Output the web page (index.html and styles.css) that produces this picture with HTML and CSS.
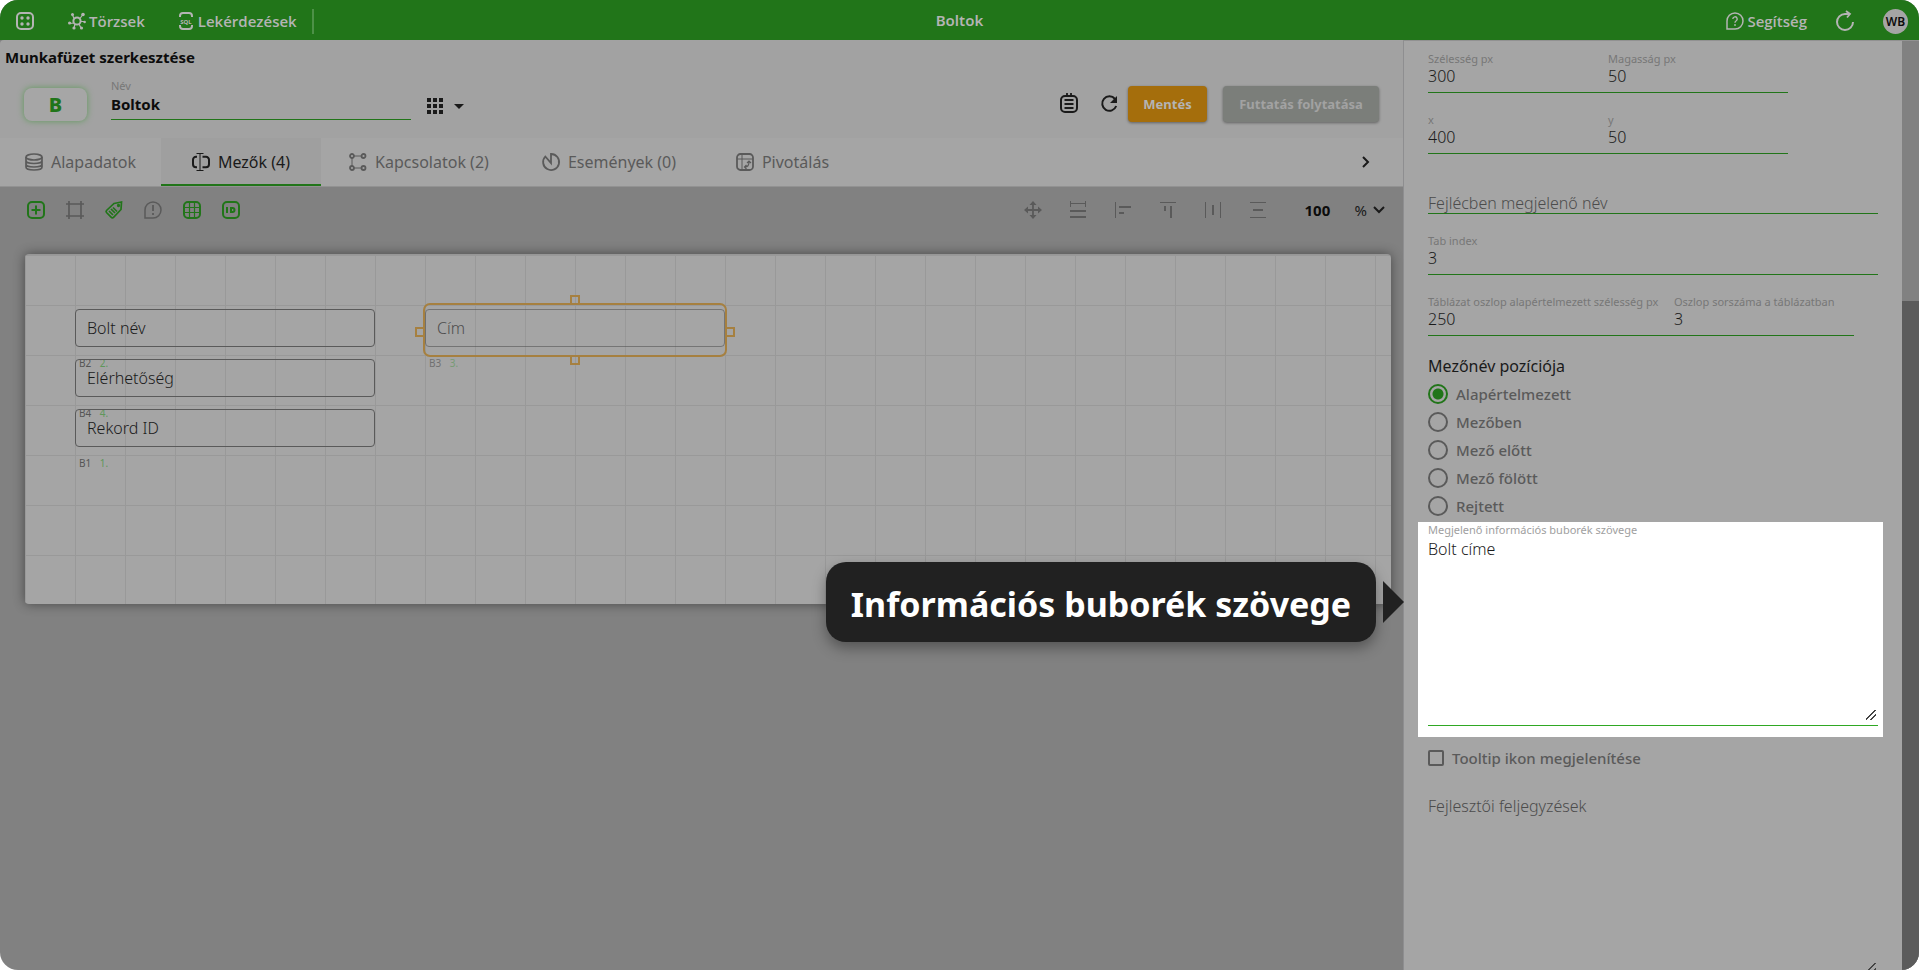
FILE: index.html
```
<!DOCTYPE html>
<html lang="hu">
<head>
<meta charset="utf-8">
<title>Boltok</title>
<link rel="stylesheet" href="styles.css">
</head>
<body>
<div class="app">
  <header class="topbar">
    <nav class="topnav">
      <button class="top-btn" aria-label="Menü"><svg class="i18" viewBox="0 0 18 18"><rect x="1" y="1" width="16" height="16" rx="4" fill="none" stroke="currentColor" stroke-width="2"/><g fill="currentColor"><circle cx="6" cy="6" r="1.7"/><circle cx="12" cy="6" r="1.7"/><circle cx="6" cy="12" r="1.7"/><circle cx="12" cy="12" r="1.7"/></g></svg></button>
      <a class="top-btn top-link" href="#torzsek"><svg class="i18" viewBox="0 0 18 18"><circle cx="9" cy="9" r="3.6" fill="none" stroke="currentColor" stroke-width="2"/><path d="M6 6.500 4.500 3M12 6.500l2.500-3.500M6 11l-4 .5M11 12l2 4M12.500 9.500h4M7 12l-1 4" stroke="currentColor" stroke-width="1.200"/><g fill="currentColor"><circle cx="4.500" cy="2.500" r="1.500"/><circle cx="15" cy="2.500" r="1.800"/><circle cx="1.600" cy="11" r="1.600"/><circle cx="16.600" cy="10" r="1.300"/><circle cx="6" cy="16" r="1.600"/><circle cx="13.500" cy="16" r="1.600"/></g></svg>Törzsek</a>
      <a class="top-btn top-link" href="#lekerdezesek"><svg class="i18" viewBox="0 0 18 18"><path d="M3 5V4a3 3 0 0 1 3-3h6a3 3 0 0 1 3 3v1M3 13v1a3 3 0 0 0 3 3h6a3 3 0 0 0 3-3v-1" fill="none" stroke="currentColor" stroke-width="2"/><text x="9" y="11.500" text-anchor="middle" class="sql">SQL</text></svg>Lekérdezések</a>
      <span class="top-sep"></span>
    </nav>
    <h1 class="top-title">Boltok</h1>
    <div class="top-right">
      <a class="top-btn top-link" href="#segitseg"><svg class="i18" viewBox="0 0 18 18"><path d="M1 17V9a8 8 0 1 1 8 8z" fill="none" stroke="currentColor" stroke-width="1.500"/><path d="M6.800 7a2.200 2.200 0 1 1 3.200 2c-.8.500-1 .8-1 1.800" fill="none" stroke="currentColor" stroke-width="1.400"/><circle cx="9" cy="13" r=".9" fill="currentColor"/></svg>Segítség</a>
      <button class="top-btn" aria-label="Frissítés"><svg class="i20" viewBox="0 0 20 20"><path d="M18 11a8 8 0 1 1-8-8h4" fill="none" stroke="currentColor" stroke-width="2"/><path d="m11 0 4 3-3 3.500" fill="none" stroke="currentColor" stroke-width="1.800"/></svg></button>
      <button class="avatar">WB</button>
    </div>
  </header>

  <div class="workspace">
    <main class="editor">
      <section class="book-head">
        <h2 class="page-title">Munkafüzet szerkesztése</h2>
        <div class="book-row">
          <span class="badge">B</span>
          <div class="name-field">
            <label for="book-name">Név</label>
            <input id="book-name" type="text" value="Boltok">
          </div>
          <button class="grid-btn" aria-label="Ikon választása">
            <svg class="i18" viewBox="0 0 18 18" fill="currentColor"><path d="M1 1h4v4H1zM7 1h4v4H7zM13 1h4v4h-4zM1 7h4v4H1zM7 7h4v4H7zM13 7h4v4h-4zM1 13h4v4H1zM7 13h4v4H7zM13 13h4v4h-4z"/></svg>
            <svg class="caret" viewBox="0 0 10 5"><path d="M0 0h10L5 5z" fill="currentColor"/></svg>
          </button>
          <div class="actions">
            <button class="icon-btn" aria-label="Jegyzetek"><svg class="i20" viewBox="0 0 20 20"><rect x="2" y="2" width="16" height="16" rx="4" fill="none" stroke="currentColor" stroke-width="2"/><path d="M8 -1v3M12 -1v3M5.500 6h9M5.500 10h9M5.500 14h9" stroke="currentColor" stroke-width="1.800"/></svg></button>
            <button class="icon-btn" aria-label="Újratöltés"><svg class="i20" viewBox="0 0 20 20"><path d="M16 5A7.200 7.200 0 1 0 17.200 12" fill="none" stroke="currentColor" stroke-width="2"/><path d="M18 2v7h-7z" fill="currentColor"/></svg></button>
            <button class="btn btn-save">Mentés</button>
            <button class="btn btn-run">Futtatás folytatása</button>
          </div>
        </div>
      </section>

      <nav class="tabs">
        <button class="tab"><svg class="i18" viewBox="0 0 18 18" fill="none" stroke="currentColor" stroke-width="1.700"><ellipse cx="9" cy="4" rx="8" ry="3"/><path d="M1 4v10c0 4 16 4 16 0V4M1 7.500c0 4 16 4 16 0M1 11c0 4 16 4 16 0"/></svg>Alapadatok</button>
        <button class="tab tab-active"><svg class="i18" viewBox="0 0 18 18" fill="none" stroke="currentColor"><path d="M5 3.800H4a3 3 0 0 0-3 3v4.400a3 3 0 0 0 3 3h1M10.500 3.800H14a3 3 0 0 1 3 3v4.400a3 3 0 0 1-3 3h-3.500" stroke-width="2"/><path d="M8 .5v17M4.500 .5h7M4.500 17.500h7" stroke-width="1"/></svg>Mezők (4)</button>
        <button class="tab"><svg class="i18" viewBox="0 0 18 18" fill="none" stroke="currentColor"><g stroke-width="1.800"><circle cx="3" cy="3" r="2"/><circle cx="14.500" cy="3" r="2"/><circle cx="3" cy="15" r="2"/><circle cx="14.500" cy="15" r="2"/></g><path d="M3 5v8M5 3h7.500M5 15h7.500" stroke-width="1"/></svg>Kapcsolatok (2)</button>
        <button class="tab"><svg class="i18" viewBox="0 0 18 18"><path d="M9 1a8 8 0 1 1-5.700 2.500L9 10z" fill="none" stroke="currentColor" stroke-width="1.800"/></svg>Események (0)</button>
        <button class="tab"><svg class="i18" viewBox="0 0 18 18" fill="none" stroke="currentColor"><rect x="1" y="1" width="16" height="16" rx="3.500" stroke-width="1.800"/><path d="M6 1v16M1 6h16" stroke-width="1"/><path d="M9 14c3 0 4-2 4-5M11 10l2-2 2 2M10.500 12 8.500 14l2 2" stroke-width="1.200"/></svg>Pivotálás</button>
        <button class="tabs-next" aria-label="További fülek"><svg viewBox="0 0 8 12"><path d="m1 1 5 5-5 5" fill="none" stroke="currentColor" stroke-width="2"/></svg></button>
      </nav>

      <div class="toolbar">
        <div class="tools tools-left">
          <button class="on" aria-label="Új mező"><svg class="i18" viewBox="0 0 18 18" fill="none" stroke="currentColor" stroke-width="2"><rect x="1" y="1" width="16" height="16" rx="4"/><path d="M9 4.500v9M4.500 9h9"/></svg></button>
          <button aria-label="Keret"><svg class="i18" viewBox="0 0 18 18" fill="none" stroke="currentColor" stroke-width="1.700"><path d="M3 0v18M15 0v18M0 3h18M0 15h18"/></svg></button>
          <button class="on" aria-label="Címke"><svg class="i18" viewBox="0 0 18 18" fill="none" stroke="currentColor" stroke-width="1.700"><path d="M9 2.500 16.500 1 16 8.500 8.500 16.300a1.500 1.500 0 0 1-2.200 0L1.500 11.500a1.500 1.500 0 0 1 0-2zM4 10l4 4M6 8l4 4M8 6.500l4 4"/><circle cx="13.500" cy="4.500" r=".8"/></svg></button>
          <button aria-label="Figyelmeztetés"><svg class="i18" viewBox="0 0 18 18" fill="none" stroke="currentColor"><path d="M1 17V9a8 8 0 1 1 8 8z" stroke-width="1.500"/><path d="M9 4v6M9 12v2" stroke-width="1.800"/></svg></button>
          <button class="on" aria-label="Rács"><svg class="i18" viewBox="0 0 18 18" fill="none" stroke="currentColor"><rect x="1" y="1" width="16" height="16" rx="4" stroke-width="2"/><path d="M6.500 1v16M11.500 1v16M1 6.500h16M1 11.500h16" stroke-width="1.200"/></svg></button>
          <button class="on" aria-label="Azonosító"><svg class="i18" viewBox="0 0 18 18" fill="none" stroke="currentColor" stroke-width="2"><rect x="1" y="1" width="16" height="16" rx="4"/><path d="M5 6v6M9 7h1.500a2 2 0 0 1 0 4H9z"/></svg></button>
        </div>
        <div class="tools tools-right">
          <button aria-label="Mozgatás"><svg class="i18" viewBox="0 0 18 18"><path d="M9 2v14M2 9h14" stroke="currentColor" stroke-width="1.800"/><path d="m9 0 3.500 4h-7zM9 18l3.500-4h-7zM0 9l4-3.500v7zM18 9l-4-3.500v7z" fill="currentColor"/></svg></button>
          <button aria-label="Azonos szélesség"><svg class="i18" viewBox="0 0 18 18" fill="none" stroke="currentColor"><path d="M1.500 0v6M16.500 0v6M1 2.500h16" stroke-width="1"/><path d="M1 10h16M1 16h16" stroke-width="2"/></svg></button>
          <button aria-label="Balra igazítás"><svg class="i18" viewBox="0 0 18 18" fill="none" stroke="currentColor"><path d="M1.500 1v16" stroke-width="1"/><path d="M5 6h12M5 12h5" stroke-width="2"/></svg></button>
          <button aria-label="Felülre igazítás"><svg class="i18" viewBox="0 0 18 18" fill="none" stroke="currentColor"><path d="M1 1.500h16" stroke-width="1"/><path d="M6 5v5M12 5v12" stroke-width="2"/></svg></button>
          <button aria-label="Vízszintes elosztás"><svg class="i18" viewBox="0 0 18 18" fill="none" stroke="currentColor"><path d="M1.500 1v16M16.500 1v16" stroke-width="1"/><path d="M9 4v10" stroke-width="2"/></svg></button>
          <button aria-label="Függőleges elosztás"><svg class="i18" viewBox="0 0 18 18" fill="none" stroke="currentColor"><path d="M1 1.500h16M1 16.500h16" stroke-width="1"/><path d="M4 9h10" stroke-width="2"/></svg></button>
        </div>
        <input class="zoom-value" type="text" aria-label="Nagyítás" value="100">
        <span class="zoom-unit">%</span>
        <button class="zoom-more" aria-label="Nagyítás választása"><svg viewBox="0 0 12 8"><path d="m1 1 5 5 5-5" fill="none" stroke="currentColor" stroke-width="2"/></svg></button>
      </div>

      <div class="stage">
        <div class="canvas">
          <div class="node n-name"><button class="node-box">Bolt név</button><p class="node-tag">B2 <span>2.</span></p></div>
          <div class="node n-contact"><button class="node-box">Elérhetőség</button><p class="node-tag">B4 <span>4.</span></p></div>
          <div class="node n-id"><button class="node-box">Rekord ID</button><p class="node-tag">B1 <span>1.</span></p></div>
          <div class="node n-address"><button class="node-box">Cím</button><p class="node-tag">B3 <span>3.</span></p></div>
          <div class="selection"><i class="h-top"></i><i class="h-right"></i><i class="h-bottom"></i><i class="h-left"></i></div>
        </div>
        <div class="callout">Információs buborék szövege</div>
      </div>
    </main>

    <aside class="panel">
      <form class="props">
        <div class="pair">
          <div class="field"><label for="w">Szélesség px</label><input id="w" type="text" value="300"></div>
          <div class="field"><label for="h">Magasság px</label><input id="h" type="text" value="50"></div>
        </div>
        <div class="pair">
          <div class="field"><label for="x">x</label><input id="x" type="text" value="400"></div>
          <div class="field"><label for="y">y</label><input id="y" type="text" value="50"></div>
        </div>
        <input class="head-name" type="text" aria-label="Fejlécben megjelenő név" placeholder="Fejlécben megjelenő név">
        <div class="field"><label for="tab">Tab index</label><input id="tab" type="text" value="3"></div>
        <div class="pair pair-wide">
          <div class="field"><label for="colw">Táblázat oszlop alapértelmezett szélesség px</label><input id="colw" type="text" value="250"></div>
          <div class="field"><label for="coln">Oszlop sorszáma a táblázatban</label><input id="coln" type="text" value="3"></div>
        </div>
        <fieldset class="positions">
          <legend>Mezőnév pozíciója</legend>
          <label><input type="radio" name="pos" checked>Alapértelmezett</label>
          <label><input type="radio" name="pos">Mezőben</label>
          <label><input type="radio" name="pos">Mező előtt</label>
          <label><input type="radio" name="pos">Mező fölött</label>
          <label><input type="radio" name="pos">Rejtett</label>
        </fieldset>
        <div class="spotlight">
          <label for="tip">Megjelenő információs buborék szövege</label>
          <div class="tip-line"><textarea id="tip">Bolt címe</textarea></div>
        </div>
        <label class="check"><input type="checkbox">Tooltip ikon megjelenítése</label>
        <textarea class="notes" aria-label="Fejlesztői feljegyzések" placeholder="Fejlesztői feljegyzések"></textarea>
      </form>
      <div class="scrollbar"><div class="thumb"></div></div>
    </aside>
  </div>
</div>
</body>
</html>
```
FILE: styles.css
```
:root {
  --green: #217519;
  --paper: #a5a5a5;
  --ink: #1a1a1a;
  --muted: #5a5a5a;
  --label: #777777;
  --field-line: #217519;
}
* { box-sizing: border-box; }
body {
  margin: 0;
  background: #fff;
  font-family: "Noto Sans", "Open Sans", sans-serif;
  font-size: 15px;
  color: var(--ink);
}
button, input, textarea { font: inherit; color: inherit; margin: 0; padding: 0; border: 0; background: none; outline: 0; border-radius: 0; }
h1, h2, p { margin: 0; }
svg { display: block; flex: none; overflow: visible; }
.i18 { width: 18px; height: 18px; }
.i20 { width: 20px; height: 20px; }

.app { height: 100vh; display: flex; flex-direction: column; overflow: hidden; border-radius: 18px; background: #818181; }

/* top bar */
.topbar { flex: none; height: 40px; display: grid; grid-template-columns: 1fr auto 1fr; align-items: center; background: var(--green); color: #b4b4b4; }
.topnav, .top-right { display: flex; align-items: center; height: 40px; padding-top: 2px; }
.topnav { padding-left: 16px; }
.top-btn { display: flex; align-items: center; gap: 3px; color: inherit; }
.top-link { font-family: "Open Sans", "Noto Sans", sans-serif; font-weight: 600; text-decoration: none; line-height: 24px; }
.topnav .top-link { margin-left: 34px; }
.topnav .top-link + .top-link { margin-left: 32px; }
.sql { font: bold 6px "Noto Sans", sans-serif; fill: currentColor; }
.top-sep { width: 2px; height: 25px; margin-left: 15px; background: #4d9147; }
.top-title { font-size: 15px; line-height: 24px; font-weight: 600; }
.top-right { justify-content: flex-end; gap: 28px; padding-right: 11px; }
.avatar { width: 25px; height: 25px; border-radius: 50%; background: var(--paper); color: #0c0c0c; font-size: 12px; font-weight: 600; }

.workspace { flex: 1; min-height: 0; display: flex; }
.editor { flex: 1; min-width: 0; display: flex; flex-direction: column; }

/* workbook header */
.book-head { flex: none; height: 98px; background: #a2a2a2; border-top-left-radius: 4px; }
.page-title { padding: 5px 5px 0; font-size: 15px; line-height: 24px; font-weight: 700; color: #0c0c0c; }
.book-row { display: flex; align-items: flex-start; padding: 9px 24px 0 24px; }
.badge { width: 63px; height: 33px; margin: 10px 24px 0 0; border-radius: 8px; background: #a6a6a6; box-shadow: 0 0 6px #5f9a5a; color: var(--green); font-size: 20px; line-height: 33px; font-weight: 800; text-align: center; }
.name-field { width: 300px; display: flex; flex-direction: column; }
.name-field label { font-size: 11px; line-height: 16px; color: var(--label); }
.name-field input { width: 100%; height: 26px; padding-bottom: 5px; border-bottom: 1px solid var(--field-line); font-weight: 700; color: #0c0c0c; }
.grid-btn { display: flex; align-items: center; gap: 10px; margin: 19px 0 0 15px; }
.caret { width: 10px; height: 5px; }
.actions { margin: 8px 0 0 auto; display: flex; align-items: center; }
.icon-btn { margin-right: 20px; }
.icon-btn + .icon-btn { margin-right: 9px; }
.btn { height: 36px; border-radius: 4px; font-size: 13px; font-weight: 700; box-shadow: 0 1px 3px rgba(0, 0, 0, .4); }
.btn-save { width: 79px; background: #a56e0c; color: #b4b4b4; }
.btn-run { width: 156px; margin-left: 16px; background: #7b7e7a; color: #a2a2a2; }

/* tabs */
.tabs { flex: none; height: 49px; display: grid; grid-template-columns: 161px 160px 196px 184px 163px 1fr; background: var(--paper); border-bottom: 1px solid #929292; }
.tab { display: flex; align-items: center; justify-content: center; gap: 8px; padding-top: 2px; border-bottom: 2px solid transparent; white-space: nowrap; font-size: 16px; color: var(--muted); }
.tab-active { background: #9f9f9f; border-bottom-color: var(--green); color: var(--ink); }
.tabs-next { justify-self: end; width: 74px; display: grid; place-items: center; }
.tabs-next svg { width: 8px; height: 12px; }

/* toolbar */
.toolbar { flex: none; height: 45px; display: flex; align-items: center; padding: 0 18px 0 27px; }
.tools { display: flex; color: var(--muted); }
.tools .on { color: var(--green); }
.tools-left { gap: 21px; }
.tools-right { gap: 27px; margin-left: auto; }
.zoom-value { width: 50px; margin-left: 38px; font-weight: 700; color: #0c0c0c; }
.zoom-unit { margin-right: 6px; }
.zoom-more svg { width: 12px; height: 8px; }

/* design surface */
.stage { flex: 1; min-height: 0; position: relative; padding: 22px 12px 0 25px; }
.canvas {
  position: relative;
  height: 350px;
  border-radius: 4px;
  border-top: 1px solid #979797;
  background-color: var(--paper);
  background-image: linear-gradient(90deg, #999 1px, transparent 1px), linear-gradient(#999 1px, transparent 1px);
  background-size: 50px 50px;
  box-shadow: 0 0 12px rgba(0, 0, 0, .45);
}
.node { position: absolute; width: 300px; }
.n-name { left: 50px; top: 54px; }
.n-contact { left: 50px; top: 104px; }
.n-id { left: 50px; top: 154px; }
.n-address { left: 400px; top: 54px; opacity: .65; }
.node-box { display: block; width: 100%; height: 38px; padding: 0 11px; border: 1px solid #5a5a5a; border-radius: 4px; text-align: left; font-size: 16px; font-weight: 300; color: var(--ink); }
.node-tag { padding: 9px 4px 0; font-size: 10px; line-height: 14px; color: #555; }
.node-tag span { margin-left: 6px; color: #5f975b; }
.selection { position: absolute; left: 398px; top: 48px; width: 304px; height: 54px; border: 2px solid #a68040; border-radius: 7px; }
.selection i { position: absolute; width: 10px; height: 10px; border: 2px solid #a68040; }
.selection .h-top { left: 145px; top: -10px; }
.selection .h-bottom { left: 145px; bottom: -10px; }
.selection .h-left { left: -10px; top: 22px; }
.selection .h-right { right: -10px; top: 22px; }
.callout { position: absolute; right: 27px; top: 330px; width: 550px; height: 80px; padding-top: 2px; border-radius: 20px; background: #212121; box-shadow: 0 6px 14px rgba(0, 0, 0, .35); color: #fff; font-size: 34px; line-height: 80px; font-weight: 700; text-align: center; white-space: nowrap; }
.callout::after { content: ""; position: absolute; right: -28px; top: 19px; border: solid transparent; border-width: 21px 0 21px 21px; border-left-color: #212121; }

/* properties panel */
.panel { flex: none; width: 516px; display: flex; background: var(--paper); border-left: 1px solid #8e8e90; border-top: 1px solid #919191; }
.props { flex: 1; min-width: 0; padding: 10px 24px 0; overflow: hidden; display: flex; flex-direction: column; }
.pair { display: grid; grid-template-columns: 180px 180px; margin-bottom: 19px; }
.pair-wide { grid-template-columns: 246px 180px; margin: 19px 0; }
.pair + .head-name { margin: 21px 0 19px; }
.field { display: flex; flex-direction: column; }
.field label, .spotlight label { display: block; font-size: 11px; line-height: 16px; color: var(--label); white-space: nowrap; }
.field input { width: 100%; height: 26px; padding-bottom: 7px; border-bottom: 1px solid var(--field-line); font-size: 16px; font-weight: 300; }
.head-name { flex: none; height: 20px; padding-bottom: 2px; border-bottom: 1px solid var(--field-line); font-size: 16px; font-weight: 300; }
::placeholder { color: #4c4c4c; opacity: 1; }
.positions { margin: 0; padding: 0; border: 0; min-width: 0; }
.positions legend { padding: 0 0 3px; font-size: 16px; line-height: 22px; }
.positions label { display: flex; align-items: center; gap: 8px; height: 28px; font-weight: 500; color: var(--muted); }
.positions input { appearance: none; width: 20px; height: 20px; border: 2px solid var(--muted); border-radius: 50%; }
.positions input:checked { border-color: var(--green); background: radial-gradient(circle, var(--green) 5px, transparent 6px); }
.spotlight { flex: none; margin: 2px -5px 0 -10px; padding: 0 5px 11px 10px; background: #fff; }
.spotlight label { color: #a0a0a0; }
.tip-line { padding-bottom: 3px; border-bottom: 1px solid #2fa823; }
.tip-line textarea { display: block; width: 100%; height: 184px; font-size: 16px; font-weight: 300; line-height: 22px; resize: vertical; }
textarea::-webkit-resizer { background: linear-gradient(135deg, transparent 44%, #444 44% 54%, transparent 54% 70%, #444 70% 80%, transparent 80%) center / 10px 10px no-repeat; }
.check { display: flex; align-items: center; gap: 8px; height: 24px; margin-top: 11px; font-weight: 500; color: var(--muted); }
.check input { appearance: none; width: 16px; height: 16px; border: 2px solid var(--muted); border-radius: 2px; }
.notes { flex: none; width: 100%; height: 181px; margin-top: 26px; font-size: 16px; font-weight: 300; line-height: 24px; resize: vertical; }
.scrollbar { flex: none; width: 17px; background: #818181; display: flex; align-items: flex-end; }
.thumb { width: 100%; height: 72%; background: #5b5b5b; }
```
